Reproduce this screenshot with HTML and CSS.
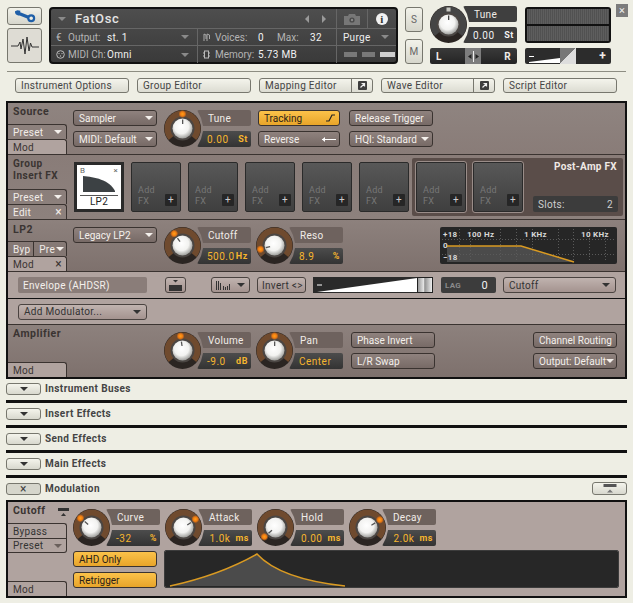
FILE: index.html
```html
<!DOCTYPE html>
<html lang="en">
<head>
  <meta charset="UTF-8" />
  <title>FatOsc</title>
  <link rel="stylesheet" href="styles.css">
</head>
<body>

  <!-- shared knob parts -->
  <svg class="defs" width="0" height="0">
    <defs>
      <radialGradient id="capFill" cx="45%" cy="40%" r="60%">
        <stop offset="0" stop-color="#ffffff"/>
        <stop offset="0.6" stop-color="#f2f2f0"/>
        <stop offset="1" stop-color="#9f9f9c"/>
      </radialGradient>
      <radialGradient id="glowFill">
        <stop offset="0" stop-color="#ffa21a"/>
        <stop offset="0.55" stop-color="#ee7a12"/>
        <stop offset="1" stop-color="#ee7a12" stop-opacity="0"/>
      </radialGradient>
      <symbol id="knobBase" viewBox="0 0 37 37">
        <circle cx="18.5" cy="18.5" r="18.5" fill="#2b2522"/>
        <path d="M7.4 27.8A14.5 14.5 0 1 1 29.6 27.8" fill="none" stroke="currentColor" stroke-width="7"/>
        <circle cx="18.5" cy="18.5" r="12" fill="#4b4643"/>
        <circle cx="18.5" cy="18.5" r="10" fill="url(#capFill)"/>
      </symbol>
      <symbol id="knobMark" viewBox="0 0 37 37">
        <circle cx="18.5" cy="4" r="4" fill="url(#glowFill)"/>
        <rect x="18" y="9.5" width="1.3" height="4.5" fill="#555"/>
      </symbol>
    </defs>
  </svg>

  <div class="page">
    <!-- Top bar -->
    <div class="top">
      <div class="tool-col">
        <button class="tool tool-wrench">
          <svg width="22" height="13" viewBox="0 0 22 13"><path d="M5 3.5 15 7.5" stroke="#1f5fa8" stroke-width="3.4"/><path d="M1 1.2 4.4 2.6 6.4.8 3.4.3ZM1 1.2C.6 4 3 6 5.6 5.2L6.4.8" fill="#1f5fa8"/><circle cx="17.2" cy="8.3" r="2.9" fill="#eeeee4" stroke="#1f5fa8" stroke-width="2.2"/></svg>
        </button>
        <button class="tool tool-wave">
          <svg width="30" height="24" viewBox="0 0 30 24"><path d="M1 12H8L10 8 11 15 13 5 15 20 17 3 19 17 20.5 9 22 13H29" fill="none" stroke="#333" stroke-width="1"/></svg>
        </button>
      </div>

      <div class="header">
        <div class="hdr-title">
          <span class="caret caret-grey"></span>
          <span class="inst-name">FatOsc</span>
          <span class="nav-arrows"><i class="tri-left"></i><i class="tri-right"></i></span>
        </div>
        <div class="hdr-icons">
          <span class="hdr-cam">
            <svg width="16" height="12" viewBox="0 0 16 12"><path d="M0 3H4L5 1H11L12 3H16V12H0Z" fill="#777"/><circle cx="8" cy="7" r="2.6" fill="#4a4a4a"/><circle cx="8" cy="7" r="1.2" fill="#888"/></svg>
          </span>
          <span class="hdr-info">i</span>
        </div>
        <div class="hdr-cell">
          <span class="hdr-icon">€</span>
          <span class="hdr-key">Output:</span>
          <span class="hdr-val">st. 1</span>
          <span class="caret caret-grey caret-end"></span>
        </div>
        <div class="hdr-cell hdr-mid">
          <span class="hdr-icon">
            <svg width="7" height="8" viewBox="0 0 7 8"><path d="M1 8V1L3 2V6M4 8V1L6.5 2V6" fill="none" stroke="#aaa"/></svg>
          </span>
          <span class="hdr-key key-wide">Voices:</span>
          <span class="hdr-val val-short">0</span>
          <span class="hdr-key key-max">Max:</span>
          <span class="hdr-val">32</span>
        </div>
        <div class="hdr-cell hdr-purge">
          <span>Purge</span>
          <span class="caret caret-grey"></span>
        </div>
        <div class="hdr-cell">
          <span class="hdr-icon">
            <svg width="9" height="9" viewBox="0 0 9 9"><circle cx="4.5" cy="4.5" r="3.8" fill="none" stroke="#bbb"/><circle cx="3" cy="3.6" r=".7" fill="#bbb"/><circle cx="6" cy="3.6" r=".7" fill="#bbb"/><circle cx="4.5" cy="6" r=".7" fill="#bbb"/></svg>
          </span>
          <span class="hdr-key">MIDI Ch:</span>
          <span class="hdr-val">Omni</span>
          <span class="caret caret-grey caret-end"></span>
        </div>
        <div class="hdr-cell hdr-mid">
          <span class="hdr-icon">
            <svg width="7" height="9" viewBox="0 0 7 9"><rect x="1.5" y="1" width="4" height="7" fill="none" stroke="#bbb"/><path d="M0 3H1.5M0 6H1.5M5.5 3H7M5.5 6H7" stroke="#bbb"/></svg>
          </span>
          <span class="hdr-key key-wide">Memory:</span>
          <span class="hdr-val">5.73 MB</span>
        </div>
        <div class="hdr-cell hdr-lights">
          <i></i><i></i><i class="on"></i>
        </div>
      </div>

      <div class="sm-col">
        <button class="tool sm">S</button>
        <button class="tool sm">M</button>
      </div>

      <div class="tune-col">
        <div class="unit unit-top">
          <svg class="knob knob-grey"><use href="#knobBase"/><rect x="16.5" y="1.5" width="4" height="4" fill="#c8c8c2"/><rect x="18" y="9.5" width="1.3" height="4.5" fill="#444"/></svg>
          <div class="lab">Tune</div>
          <div class="val val-white"><span>0.00</span><b>St</b></div>
        </div>
        <div class="pan-bar">
          <span>L</span>
          <i class="pan-thumb">
            <svg width="15" height="11" viewBox="0 0 15 11"><path d="M7.5 0V11" stroke="#eee"/><path d="M2 5.5 5.5 3V8ZM13 5.5 9.5 3V8Z" fill="#222"/></svg>
          </i>
          <span>R</span>
        </div>
      </div>

      <div class="meter-col">
        <div class="meter"><i></i><i></i></div>
        <div class="vol-bar">
          <svg class="vol-wedge" width="52" height="15" viewBox="0 0 52 15"><path d="M5 13 36 9V14H5Z" fill="#fff"/><path d="M5 7.5H10" stroke="#fff"/></svg>
          <i class="vol-thumb"></i>
          <span>+</span>
        </div>
      </div>

      <button class="close-x">×</button>
    </div>

    <div class="top-rule"></div>

    <div class="tabs">
      <button class="page-btn">Instrument Options</button>
      <button class="page-btn">Group Editor</button>
      <button class="page-btn page-split"><span>Mapping Editor</span>
        <i class="pop"><svg width="9" height="9" viewBox="0 0 9 9"><rect width="9" height="9" rx="1" fill="#3d3d3d"/><path d="M2.5 6.5 6 3M3.5 2.5H6.5V5.5" fill="none" stroke="#eee" stroke-width="1.2"/></svg></i>
      </button>
      <button class="page-btn page-split"><span>Wave Editor</span>
        <i class="pop"><svg width="9" height="9" viewBox="0 0 9 9"><rect width="9" height="9" rx="1" fill="#3d3d3d"/><path d="M2.5 6.5 6 3M3.5 2.5H6.5V5.5" fill="none" stroke="#eee" stroke-width="1.2"/></svg></i>
      </button>
      <button class="page-btn">Script Editor</button>
    </div>

    <!-- Main panel -->
    <div class="panel">

      <div class="section sec-source">
        <div class="side">
          <div class="side-title">Source</div>
          <div class="side-tabs">
            <div class="side-tab">Preset <span class="caret"></span></div>
            <div class="side-tab tab-light">Mod</div>
          </div>
        </div>
        <div class="controls">
          <div class="col col-84">
            <div class="btn">Sampler <span class="caret"></span></div>
            <div class="btn">MIDI: Default <span class="caret"></span></div>
          </div>
          <div class="unit">
            <svg class="knob"><use href="#knobBase"/><use href="#knobMark"/></svg>
            <div class="lab">Tune</div>
            <div class="val"><span>0.00</span><b>St</b></div>
          </div>
          <div class="col col-82">
            <div class="btn btn-on">Tracking
              <svg width="10" height="8" viewBox="0 0 10 8"><path d="M0 7H3L6 1H9" fill="none" stroke="#222" stroke-width="1.2"/></svg>
            </div>
            <div class="btn">Reverse
              <svg width="14" height="5" viewBox="0 0 14 5"><path d="M0 2.5H14" stroke="#fff"/><path d="M0 2.5 3 0V5Z" fill="#fff"/></svg>
            </div>
          </div>
          <div class="col col-84 col-gap9">
            <div class="btn">Release Trigger</div>
            <div class="btn">HQI: Standard <span class="caret"></span></div>
          </div>
        </div>
      </div>

      <div class="section sec-group">
        <div class="side">
          <div class="side-title title-tall">Group<br>Insert FX</div>
          <div class="side-tabs">
            <div class="side-tab">Preset <span class="caret"></span></div>
            <div class="side-tab">Edit <span class="tab-x">×</span></div>
          </div>
        </div>
        <div class="slots">
          <div class="slot-lp2">
            <div class="lp2-top"><span>B</span><span>×</span></div>
            <svg width="34" height="17" viewBox="0 0 34 17"><path d="M0 0C12 1 28 4 34 16V17H0Z" fill="#3c4144"/></svg>
            <div class="lp2-name">LP2</div>
          </div>
          <div class="slot"><span>Add<br>FX</span><i class="plus">+</i></div>
          <div class="slot"><span>Add<br>FX</span><i class="plus">+</i></div>
          <div class="slot"><span>Add<br>FX</span><i class="plus">+</i></div>
          <div class="slot"><span>Add<br>FX</span><i class="plus">+</i></div>
          <div class="slot"><span>Add<br>FX</span><i class="plus">+</i></div>
          <div class="post-amp">
            <div class="slot slot-framed"><span>Add<br>FX</span><i class="plus">+</i></div>
            <div class="slot slot-framed"><span>Add<br>FX</span><i class="plus">+</i></div>
            <div class="post-info">
              <div class="post-title">Post-Amp FX</div>
              <div class="post-slots"><span>Slots:</span><span>2</span></div>
            </div>
          </div>
        </div>
      </div>

      <div class="section sec-lp2">
        <div class="side">
          <div class="side-title side-title-low">LP2</div>
          <div class="side-tabs">
            <div class="side-tab tab-pair"><span>Byp</span><span>Pre <span class="caret"></span></span></div>
            <div class="side-tab tab-light">Mod <span class="tab-x">×</span></div>
          </div>
        </div>
        <div class="controls">
          <div class="col col-84">
            <div class="btn">Legacy LP2 <span class="caret"></span></div>
          </div>
          <div class="unit">
            <svg class="knob"><use href="#knobBase"/><g transform="rotate(-35 18.5 18.5)"><use href="#knobMark"/></g></svg>
            <div class="lab">Cutoff</div>
            <div class="val"><span>500.0</span><b>Hz</b></div>
          </div>
          <div class="unit unit-near">
            <svg class="knob"><use href="#knobBase"/><g transform="rotate(-105 18.5 18.5)"><use href="#knobMark"/></g></svg>
            <div class="lab">Reso</div>
            <div class="val"><span>8.9</span><b>%</b></div>
          </div>
          <svg class="eq" width="177" height="37" viewBox="0 0 177 37">
            <rect width="177" height="37" rx="2" fill="#262626"/>
            <path d="M7 19H81L134 35H7Z" fill="#4b4b4b"/>
            <path d="M19.5 2V35M30.5 2V35M60.5 2V35M76.5 2V35M92.5 2V35M118.5 2V35M133.5 2V35M149.5 2V35M165.5 2V35M2 12.5H175M2 27.5H175" stroke="#5a5a5a" stroke-dasharray="1 2"/>
            <path d="M7 19H81L134 35" fill="none" stroke="#d99a22" stroke-width="1.5"/>
            <text x="3" y="10">+18</text>
            <text x="27" y="10">100 Hz</text>
            <text x="84" y="10">1 KHz</text>
            <text x="141" y="10">10 KHz</text>
            <text x="3" y="21">0</text>
            <text x="3" y="33">−18</text>
          </svg>
        </div>
      </div>

      <div class="section sec-env">
        <div class="field">Envelope (AHDSR)</div>
        <div class="btn-lt btn-fold">
          <svg width="13" height="11" viewBox="0 0 13 11"><path d="M4 0H9L6.5 2.5Z" fill="#333"/><rect y="5" width="13" height="6" fill="#333"/></svg>
        </div>
        <div class="btn-lt btn-curve">
          <svg width="15" height="9" viewBox="0 0 15 9"><path d="M.5 0V9M2.5 0V9M4.5 2V9M7.5 5V9M9.5 6V9M11.5 5V9M13.5 3V9" stroke="#333"/></svg>
          <span class="caret caret-dark"></span>
        </div>
        <div class="btn-lt btn-invert">Invert &lt;&gt;</div>
        <div class="mod-slider">
          <svg width="104" height="16" viewBox="0 0 104 16"><path d="M4 15 104 1V15Z" fill="#fff"/><path d="M4 8H9" stroke="#fff"/></svg>
          <i class="mod-thumb"></i>
        </div>
        <div class="lag"><span>LAG</span><b>0</b></div>
        <div class="btn-lt btn-target">Cutoff <span class="caret caret-dark"></span></div>
      </div>

      <div class="section sec-add">
        <div class="btn-lt btn-add">Add Modulator... <span class="caret caret-dark"></span></div>
      </div>

      <div class="section sec-amp">
        <div class="side">
          <div class="side-title">Amplifier</div>
          <div class="side-tabs">
            <div class="side-tab tab-light">Mod</div>
          </div>
        </div>
        <div class="controls">
          <div class="col col-84"></div>
          <div class="unit">
            <svg class="knob"><use href="#knobBase"/><g transform="rotate(-8 18.5 18.5)"><use href="#knobMark"/></g></svg>
            <div class="lab">Volume</div>
            <div class="val"><span>-9.0</span><b>dB</b></div>
          </div>
          <div class="unit unit-near">
            <svg class="knob"><use href="#knobBase"/><use href="#knobMark"/></svg>
            <div class="lab">Pan</div>
            <div class="val"><span>Center</span></div>
          </div>
          <div class="col col-84 col-gap6">
            <div class="btn">Phase Invert</div>
            <div class="btn">L/R Swap</div>
          </div>
          <div class="col col-84 col-push">
            <div class="btn">Channel Routing</div>
            <div class="btn">Output: Default <span class="caret"></span></div>
          </div>
        </div>
      </div>
    </div>

    <!-- Collapsed rows -->
    <div class="fold-list">
      <div class="fold-row"><button class="fold"><span class="caret caret-dark"></span></button><span>Instrument Buses</span></div>
      <div class="fold-row"><button class="fold"><span class="caret caret-dark"></span></button><span>Insert Effects</span></div>
      <div class="fold-row"><button class="fold"><span class="caret caret-dark"></span></button><span>Send Effects</span></div>
      <div class="fold-row"><button class="fold"><span class="caret caret-dark"></span></button><span>Main Effects</span></div>
      <div class="fold-row fold-last">
        <button class="fold fold-open">×</button><span>Modulation</span>
        <button class="fold fold-right">
          <svg width="14" height="9" viewBox="0 0 14 9"><rect width="13" height="3" x=".5" fill="#555"/><path d="M4 8.5H10L7 5.5Z" fill="#777"/></svg>
        </button>
      </div>
    </div>

    <!-- Modulation panel -->
    <div class="panel panel-mod">
      <div class="side">
        <div class="side-title title-row">Cutoff
          <svg width="11" height="8" viewBox="0 0 11 8"><rect width="11" height="3" fill="#333"/><path d="M3 8H8L5.5 5Z" fill="#333"/></svg>
        </div>
        <div class="side-tab tab-dark-text">Bypass</div>
        <div class="side-tab tab-dark-text tab-closed">Preset <span class="caret caret-dim"></span></div>
        <div class="side-tabs">
          <div class="side-tab tab-light">Mod</div>
        </div>
      </div>
      <div class="mod-body">
        <div class="mod-knobs">
          <div class="unit">
            <svg class="knob"><use href="#knobBase"/><g transform="rotate(-50 18.5 18.5)"><use href="#knobMark"/></g></svg>
            <div class="lab lab-dark">Curve</div>
            <div class="val"><span>-32</span><b>%</b></div>
          </div>
          <div class="unit">
            <svg class="knob"><use href="#knobBase"/><g transform="rotate(55 18.5 18.5)"><use href="#knobMark"/></g></svg>
            <div class="lab lab-dark">Attack</div>
            <div class="val val-right"><span>1.0k</span><b>ms</b></div>
          </div>
          <div class="unit">
            <svg class="knob"><use href="#knobBase"/><g transform="rotate(-130 18.5 18.5)"><use href="#knobMark"/></g></svg>
            <div class="lab lab-dark">Hold</div>
            <div class="val val-right"><span>0.00</span><b>ms</b></div>
          </div>
          <div class="unit">
            <svg class="knob"><use href="#knobBase"/><g transform="rotate(58 18.5 18.5)"><use href="#knobMark"/></g></svg>
            <div class="lab lab-dark">Decay</div>
            <div class="val val-right"><span>2.0k</span><b>ms</b></div>
          </div>
        </div>
        <div class="mod-lower">
          <div class="col col-84">
            <div class="btn btn-on">AHD Only</div>
            <div class="btn btn-on">Retrigger</div>
          </div>
          <svg class="env-graph" width="453" height="36" viewBox="0 0 453 36">
            <rect width="453" height="36" fill="#272727"/>
            <path d="M5 35Q55 24 92 3Q115 28 180 35Z" fill="#4b4b4b"/>
            <path d="M5 35Q55 24 92 3Q115 28 180 35" fill="none" stroke="#d99a22" stroke-width="1.5"/>
          </svg>
        </div>
      </div>
    </div>
  </div>

</body>
</html>
```

FILE: styles.css
```css
* {
  box-sizing: border-box;
  font-family: Roboto, 'Liberation Sans', sans-serif;
}
body {
  margin: 0;
  background: #eeeee4;
  font-size: 10px;
  letter-spacing: 0.3px;
  color: #f1ece8;
  overflow: hidden;
  white-space: nowrap;
}
button {
  font: inherit;
  letter-spacing: inherit;
  padding: 0;
  cursor: pointer;
}
.defs {
  display: block;
}
.page {
  position: relative;
  width: 633px;
  height: 603px;
  padding-top: 7px;
}

/* Carets */
.caret {
  display: inline-block;
  flex-shrink: 0;
  width: 0;
  height: 0;
  border-left: 4px solid transparent;
  border-right: 4px solid transparent;
  border-top: 4px solid #f4f0ec;
}
.caret-grey { border-top-color: #8a8a8a; }
.caret-dark { border-top-color: #333; }
.caret-dim { border-top-color: #6a605c; }

/* Top bar */
.top {
  display: flex;
  height: 57px;
  padding-left: 7px;
}
.tool {
  display: flex;
  align-items: center;
  justify-content: center;
  border: 1px solid #77776e;
  border-radius: 3px;
  background: linear-gradient(#f2f2ea, #d6d6cc);
  color: #666;
}
.tool-col {
  display: flex;
  flex-direction: column;
  gap: 3px;
  width: 35px;
}
.tool-wrench { height: 18px; }
.tool-wave { height: 35px; background: #dedcd4; }

.header {
  display: grid;
  grid-template-columns: 146px 139px 60px;
  grid-template-rows: 20px 17px 17px;
  width: 349px;
  margin-left: 7px;
  border: 2px solid #111;
  border-radius: 4px;
  background: linear-gradient(#4e4e4e, #3a3a3a);
  color: #b4b4b4;
}
.hdr-title {
  grid-column: 1 / 3;
  display: flex;
  align-items: center;
  padding-left: 7px;
  border-bottom: 1px solid #666;
}
.inst-name {
  margin-left: 9px;
  font-size: 13px;
  font-weight: 500;
  letter-spacing: 0.6px;
  color: #e4e4e4;
}
.nav-arrows {
  display: flex;
  gap: 13px;
  margin-left: auto;
  margin-right: 10px;
}
.tri-left, .tri-right {
  width: 0;
  height: 0;
  border-top: 4px solid transparent;
  border-bottom: 4px solid transparent;
}
.tri-left { border-right: 4px solid #999; }
.tri-right { border-left: 4px solid #999; }
.hdr-icons {
  display: flex;
  border-bottom: 1px solid #666;
  border-left: 1px solid #666;
}
.hdr-cam {
  display: flex;
  align-items: center;
  justify-content: center;
  width: 31px;
  border-right: 1px solid #666;
}
.hdr-info {
  align-self: center;
  width: 12px;
  height: 12px;
  margin-left: 8px;
  border-radius: 50%;
  background: #f2f2f2;
  color: #333;
  font-family: 'Liberation Serif', serif;
  font-size: 11px;
  font-weight: bold;
  line-height: 12px;
  text-align: center;
}
.hdr-cell {
  display: flex;
  align-items: center;
  padding-left: 5px;
  border-bottom: 1px solid #666;
}
.hdr-cell:nth-child(n+6) { border-bottom: 0; }
.hdr-icon {
  display: flex;
  flex-shrink: 0;
  width: 12px;
  color: #bbb;
}
.hdr-key {
  flex-shrink: 0;
  width: 39px;
  letter-spacing: 0;
}
.hdr-val { color: #f2f2f2; }
.caret-end { margin-left: auto; margin-right: 8px; }
.hdr-mid {
  border-left: 1px solid #666;
  padding-left: 5px;
}
.key-wide { width: 43px; }
.val-short { width: 19px; }
.key-max { width: 33px; }
.hdr-purge {
  justify-content: space-between;
  padding: 0 7px 0 6px;
  border-left: 1px solid #666;
  color: #eee;
}
.hdr-lights {
  gap: 5px;
  padding-left: 7px;
  border-left: 1px solid #666;
}
.hdr-lights i {
  width: 13px;
  height: 5px;
  background: #787878;
}
.hdr-lights i.on {
  width: 15px;
  background: #cfcfcf;
}

.sm-col {
  display: flex;
  flex-direction: column;
  gap: 7px;
  width: 18px;
  margin-left: 7px;
}
.sm { height: 25px; }

.tune-col {
  width: 87px;
  margin-left: 7px;
  margin-top: -1px;
}
.unit-top { grid-template-rows: 16px 15px; row-gap: 6px; }
.pan-bar {
  display: flex;
  align-items: center;
  justify-content: space-between;
  height: 16px;
  margin-top: 5px;
  padding: 0 6px;
  border-radius: 2px;
  background: linear-gradient(#3a3a3a, #242424);
  font-weight: bold;
}
.pan-thumb {
  display: flex;
  align-items: center;
  justify-content: center;
  width: 16px;
  height: 16px;
  background: #7d7d7d;
}

.meter-col {
  width: 86px;
  margin-left: 8px;
}
.meter {
  display: flex;
  flex-direction: column;
  gap: 2px;
  height: 36px;
  border: 2px solid #111;
  border-radius: 3px;
  background: #111;
}
.meter i {
  flex: 1;
  background: repeating-linear-gradient(90deg, #5e5e5e 0 1px, #515151 1px 2px);
}
.vol-bar {
  display: flex;
  align-items: center;
  height: 16px;
  margin-top: 5px;
  overflow: hidden;
  border-radius: 2px;
  background: #2c2c2c;
  font-size: 12px;
  font-weight: bold;
}
.vol-wedge { margin-left: -1px; margin-right: -16px; flex-shrink: 0; }
.vol-thumb {
  width: 16px;
  height: 16px;
  background: linear-gradient(135deg, #777 50%, #ddd 50%);
}
.vol-bar span {
  margin-left: auto;
  margin-right: 5px;
}
.close-x {
  position: absolute;
  top: 4px;
  left: 616px;
  width: 12px;
  height: 13px;
  border: 0;
  background: #7c7c7c;
  color: #eee;
  font-size: 11px;
  line-height: 12px;
}

.top-rule {
  height: 1px;
  margin: 7px 7px 0;
  background: #8d8d82;
}
.tabs {
  display: flex;
  gap: 8px;
  margin-top: 6px;
  padding-left: 15px;
}
.page-btn {
  display: flex;
  align-items: center;
  justify-content: space-between;
  width: 114px;
  height: 15px;
  padding-left: 5px;
  border: 1px solid #77776e;
  border-radius: 3px;
  background: linear-gradient(#f4f4ec, #dcdcd2);
  color: #444;
}
.pop {
  display: flex;
  align-items: center;
  justify-content: center;
  width: 21px;
  height: 13px;
  border-left: 1px solid #77776e;
}

/* Main panel */
.panel {
  width: 621px;
  margin-top: 8px;
  margin-left: 6px;
  border: 2px solid #111;
  background: #8d807c;
}
.section {
  display: flex;
  border-bottom: 1px solid #3a3330;
}
.sec-source { height: 52px; background: linear-gradient(#8f8480, #897c78); }
.sec-group { height: 65px; background: linear-gradient(#897c78, #8d817d); }
.sec-lp2 { height: 52px; background: linear-gradient(#8d817d, #7e716d); }
.sec-amp { height: 52px; border-bottom: 0; background: linear-gradient(#8d817d, #7e716d); }

.side {
  display: flex;
  flex-direction: column;
  flex-shrink: 0;
  width: 59px;
}
.side-title {
  padding: 4px 0 0 5px;
  color: #3a3432;
  font-weight: bold;
  font-size: 10.5px;
  letter-spacing: 0.5px;
  line-height: 10px;
}
.side-title-low { padding-top: 5px; }
.title-tall {
  padding-top: 3px;
  font-size: 10px;
  line-height: 12px;
}
.side-tabs {
  margin-top: auto;
}
.side-tab {
  display: flex;
  align-items: center;
  justify-content: space-between;
  height: 15px;
  padding: 0 4px 0 5px;
  border-top: 1px solid #3a3330;
  border-right: 1px solid #3a3330;
  border-top-right-radius: 3px;
  color: #f1ece8;
}
.tab-light {
  background: #b0a39f;
  color: #3a3432;
}
.tab-x {
  font-size: 12px;
  line-height: 10px;
}
.tab-pair {
  padding: 0;
}
.tab-pair > span {
  display: flex;
  align-items: center;
  justify-content: space-between;
  height: 100%;
  padding: 0 2px 0 5px;
}
.tab-pair > span:first-child {
  width: 29px;
  border-right: 1px solid #3a3330;
}
.tab-pair > span:last-child {
  flex: 1;
  gap: 1px;
}

.controls {
  display: flex;
  flex: 1;
  gap: 7px;
  padding: 7px 0 0 6px;
}
.col {
  display: flex;
  flex-direction: column;
  gap: 5px;
}
.col-84 { width: 84px; }
.col-82 { width: 82px; }
.col-gap9 { margin-left: 2px; }
.col-gap6 { margin-left: -1px; }
.col-push { margin-left: 91px; }

.btn {
  display: flex;
  align-items: center;
  justify-content: space-between;
  height: 16px;
  padding: 0 3px 0 5px;
  border: 1px solid #3a3330;
  border-radius: 3px;
  background: linear-gradient(#8f827e, #776a66);
  color: #f4f0ec;
  letter-spacing: 0;
}
.btn-on {
  background: linear-gradient(#fbc24a, #e8a52a);
  color: #2b2218;
}

/* Knob with label and value */
.unit {
  display: grid;
  grid-template-columns: 33px 54px;
  grid-template-rows: 16px 16px;
  row-gap: 5px;
  flex-shrink: 0;
}
.unit-near { margin-left: -2px; margin-right: 2px; }
.knob {
  grid-row: 1 / 3;
  width: 37px;
  height: 37px;
  color: #6f4a2e;
}
.knob-grey { color: #454545; }
.lab, .val {
  border-radius: 2px;
}
.lab {
  display: flex;
  align-items: center;
  padding-left: 11px;
  background: #6e625e;
  clip-path: polygon(0 0, 100% 0, 100% 100%, 6px 100%, 4px 50%);
  color: #f1ece8;
}
.val {
  display: flex;
  align-items: center;
  justify-content: space-between;
  padding: 0 3px 0 10px;
  background: linear-gradient(#4c4c4c, #333);
  clip-path: polygon(6px 0, 100% 0, 100% 100%, 0 100%, 4px 50%);
  color: #f6b52e;
}
.val span {
  letter-spacing: 0.5px;
}
.val b {
  font-size: 9px;
  letter-spacing: 0.6px;
}
.val-right span {
  margin-left: auto;
  margin-right: 5px;
}
.val-white { color: #f1f1f1; background: #3d3d3d; }
.val-white b { color: #f1f1f1; }
.lab-dark { background: #6e625d; }
.unit-top .lab { background: #3f3f3f; }

.eq {
  flex-shrink: 0;
  margin-left: 88px;
}
.eq text {
  font-family: Roboto, sans-serif;
  font-size: 8px;
  font-weight: bold;
  fill: #d8d8d8;
}

/* FX slots */
.slots {
  display: flex;
  flex: 1;
  gap: 7px;
  padding: 7px 0 0 7px;
}
.slot, .slot-lp2 {
  width: 50px;
  height: 50px;
  flex-shrink: 0;
}
.slot {
  display: flex;
  align-items: flex-end;
  justify-content: space-between;
  padding: 0 3px 5px 6px;
  border: 1px solid #2a2a2a;
  border-radius: 2px;
  background: linear-gradient(#585858, #3f3f3f);
  color: #777;
  font-size: 9px;
  line-height: 10.5px;
}
.plus {
  display: block;
  width: 12px;
  height: 12px;
  border-radius: 1px;
  background: #262626;
  color: #ccc;
  font-size: 10px;
  font-style: normal;
  line-height: 11px;
  text-align: center;
}
.slot-lp2 {
  display: flex;
  flex-direction: column;
  align-items: center;
  padding: 2px 3px;
  border: 3px solid #2a2a2a;
  background: #fff;
  color: #222;
}
.lp2-top {
  display: flex;
  justify-content: space-between;
  width: 100%;
  color: #666;
  font-size: 8px;
  line-height: 7px;
  margin-bottom: 2px;
}
.lp2-name {
  width: 100%;
  margin-top: 3px;
  border-top: 1px solid #555;
  font-size: 10px;
  line-height: 11px;
  text-align: center;
}
.post-amp {
  display: flex;
  gap: 7px;
  flex-shrink: 0;
  width: 211px;
  height: 58px;
  margin: -4px 0 0 -4px;
  padding: 4px;
  background: #5a4d49;
  border-radius: 2px;
}
.slot-framed {
  outline: 1px solid #9a8d89;
}
.post-info {
  display: flex;
  flex-direction: column;
  flex-shrink: 0;
  justify-content: space-between;
  align-items: flex-end;
  width: 85px;
  margin-left: 3px;
}
.post-title {
  padding-right: 1px;
  color: #efe9e5;
  font-weight: bold;
  line-height: 9px;
}
.post-slots {
  display: flex;
  justify-content: space-between;
  align-items: center;
  width: 85px;
  height: 16px;
  padding: 0 5px;
  border-radius: 2px;
  background: #3c3c3c;
  color: #cfcfcf;
}

/* Envelope rows */
.sec-env, .sec-add {
  align-items: center;
  background: #b0a39f;
  color: #333;
}
.sec-env {
  height: 27px;
  padding-left: 10px;
  border-bottom-color: #111;
}
.sec-add {
  height: 26px;
  padding-left: 10px;
}
.field {
  display: flex;
  align-items: center;
  width: 129px;
  height: 16px;
  padding-left: 5px;
  border-radius: 2px;
  background: #8a7d79;
  color: #f4f0ec;
}
.btn-lt {
  display: flex;
  align-items: center;
  justify-content: space-between;
  height: 16px;
  padding: 0 5px;
  border: 1px solid #4a4340;
  border-radius: 3px;
  background: linear-gradient(#c0b3af, #a4938f);
  color: #333;
}
.btn-fold { width: 21px; margin-left: 18px; padding: 0 3px; }
.btn-curve { width: 39px; margin-left: 25px; padding: 0 4px; }
.btn-invert { width: 49px; margin-left: 7px; padding: 0 4px; }
.btn-target { width: 113px; margin-left: 7px; }
.btn-add { width: 129px; }
.mod-slider {
  display: flex;
  align-items: center;
  width: 120px;
  height: 16px;
  margin-left: 7px;
  background: #2a2a2a;
}
.mod-thumb {
  width: 16px;
  height: 16px;
  background: linear-gradient(90deg, #999, #eee 45%, #555 48%, #999 52%, #eee);
  border: 1px solid #222;
}
.lag {
  display: flex;
  align-items: center;
  justify-content: space-between;
  width: 55px;
  height: 16px;
  margin-left: 8px;
  padding: 0 8px 0 4px;
  border-radius: 2px;
  background: #3c3c3c;
  color: #8a8a8a;
  font-size: 8px;
  font-weight: bold;
}
.lag b {
  color: #f2f2f2;
  font-size: 11px;
  font-weight: 400;
}

/* Collapsed rows */
.fold-list {
  width: 621px;
  margin-left: 6px;
  margin-top: -1px;
}
.fold-row {
  display: flex;
  align-items: center;
  gap: 4px;
  height: 25px;
  padding-bottom: 1px;
  border-bottom: 3px solid #111;
  color: #444;
  font-weight: bold;
  letter-spacing: 0.4px;
}
.fold {
  display: flex;
  align-items: center;
  justify-content: center;
  width: 35px;
  height: 12px;
  border: 1px solid #77776e;
  border-radius: 3px;
  background: linear-gradient(#f4f4ec, #d8d8ce);
  color: #444;
}
.fold-open {
  background: #d6d6cc;
  font-weight: 400;
  font-size: 12px;
}
.fold-right {
  margin-left: auto;
  height: 13px;
}
.fold-last {
  height: 22px;
  border-bottom: 0;
}

/* Modulation panel */
.panel-mod {
  display: flex;
  height: 98px;
  margin-top: 0;
  background: #b0a39f;
  color: #333;
}
.title-row {
  display: flex;
  justify-content: space-between;
  height: 21px;
}
.title-row svg { margin-top: 2px; margin-right: -2px; }
.tab-dark-text { color: #333; }
.tab-closed {
  border-bottom: 1px solid #3a3330;
  border-bottom-right-radius: 3px;
  border-top-right-radius: 0;
}
.mod-body {
  flex: 1;
  padding: 7px 0 0 6px;
}
.mod-knobs {
  display: flex;
  gap: 5px;
}
.mod-lower {
  display: flex;
  gap: 8px;
  margin-top: 5px;
}
.env-graph {
  border-radius: 1px;
  outline: 1px solid #3c3c3c;
}
```
